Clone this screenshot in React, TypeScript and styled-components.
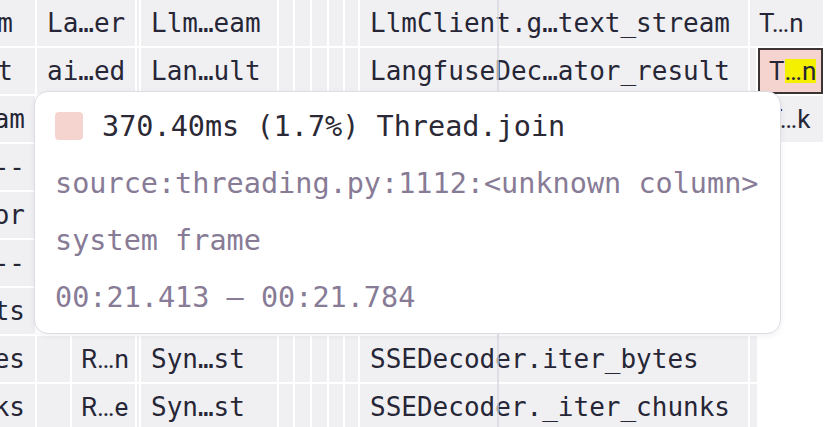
import React from 'react'
import styled, { createGlobalStyle } from 'styled-components'

const MONO = '"DejaVu Sans Mono", "Liberation Mono", monospace'
const SANS = 'Roboto, Inter, "Noto Sans", sans-serif'

type Frame = {
  w: number
  text?: string
  sans?: boolean
  end?: boolean
  pr?: number
  hot?: boolean
  match?: [string, string]
}

// common run of frames between the root column and the wide frame
const slivers = (): Frame[] => [{ w: 14 }, { w: 15 }, { w: 15 }, { w: 14 }, { w: 13 }]

// frames under the tooltip keep their boxes but no label
const rows: Frame[][] = [
  [
    { w: 35, text: '…eam', end: true, pr: 22 },
    { w: 98, text: 'La…er' },
    { w: 2 },
    { w: 136, text: 'Llm…eam' },
    ...slivers(),
    { w: 388, text: 'LlmClient.g…text_stream' },
    { w: 73, text: 'T…n', sans: true },
  ],
  [
    { w: 35, text: '…ult', end: true, pr: 22 },
    { w: 98, text: 'ai…ed' },
    { w: 2 },
    { w: 136, text: 'Lan…ult' },
    ...slivers(),
    { w: 388, text: 'LangfuseDec…ator_result' },
    { w: 6 },
    { w: 65, sans: true, hot: true, match: ['T', '…n'] },
  ],
  [
    { w: 35, text: '…eam', end: true },
    { w: 98 },
    { w: 2 },
    { w: 136 },
    ...slivers(),
    { w: 388 },
    { w: 6 },
    { w: 65, text: 'T…k', sans: true },
  ],
  [{ w: 35, text: '----', end: true }, { w: 98 }, { w: 2 }, { w: 136 }],
  [{ w: 35, text: '…tor', end: true }, { w: 98 }, { w: 2 }, { w: 136 }],
  [{ w: 35, text: '----', end: true }, { w: 98 }],
  [{ w: 35, text: '…ts', end: true }],
  [
    { w: 35, text: '…bytes', end: true },
    { w: 33 },
    { w: 63, text: 'R…n', sans: true },
    { w: 2 },
    { w: 136, text: 'Syn…st' },
    ...slivers(),
    { w: 388, text: 'SSEDecoder.iter_bytes' },
    { w: 7 },
  ],
  [
    { w: 35, text: '…chunks', end: true },
    { w: 33 },
    { w: 63, text: 'R…e', sans: true },
    { w: 2 },
    { w: 136, text: 'Syn…st' },
    ...slivers(),
    { w: 388, text: 'SSEDecoder._iter_chunks' },
    { w: 7 },
  ],
]

export default function App() {
  return (
    <>
      <GlobalStyle />
      <Stage>
        <Graph>
          {rows.map((row, i) => (
            <Row key={i}>
              {row.map((f, j) => (
                <Cell
                  key={j}
                  $w={f.w}
                  $sans={!!f.sans}
                  $end={!!f.end}
                  $pr={f.pr ?? 10}
                  $pl={f.w > 20 ? (f.sans ? 9 : 10) : 0}
                  $hot={!!f.hot}
                >
                  {f.match ? (
                    <>
                      {f.match[0]}
                      <Match>{f.match[1]}</Match>
                    </>
                  ) : (
                    f.text
                  )}
                </Cell>
              ))}
            </Row>
          ))}
        </Graph>
        <Cursor />
        <Tooltip>
          <TipLine>
            <Swatch />
            370.40ms (1.7%) Thread.join
          </TipLine>
          <TipLine $muted>source:threading.py:1112:&lt;unknown column&gt;</TipLine>
          <TipLine $muted>system frame</TipLine>
          <TipLine $muted>00:21.413 — 00:21.784</TipLine>
        </Tooltip>
      </Stage>
    </>
  )
}

/*---> Styles <---*/
const GlobalStyle = createGlobalStyle`
  body {
    margin: 0;
    background: #ffffff;
  }
`

const Stage = styled.div`
  position: relative;
  width: 828px;
  height: 427px;
  overflow: hidden;
  background: #ffffff;
`

const Graph = styled.div`
  display: flex;
  flex-direction: column;
  gap: 2px;
`

const Row = styled.div`
  display: flex;
  gap: 2px;
  height: 46px;
  flex-shrink: 0;
`

const Cell = styled.div<{
  $w: number
  $sans: boolean
  $end: boolean
  $pr: number
  $pl: number
  $hot: boolean
}>`
  flex: none;
  box-sizing: border-box;
  width: ${(p) => p.$w}px;
  display: flex;
  align-items: center;
  justify-content: ${(p) => (p.$end ? 'flex-end' : 'flex-start')};
  padding: 0 ${(p) => (p.$end ? p.$pr : 0)}px 0 ${(p) => (p.$end ? 0 : p.$pl)}px;
  overflow: hidden;
  white-space: nowrap;
  background: ${(p) => (p.$hot ? '#f5d4d0' : '#f0f0f3')};
  border: ${(p) => (p.$hot ? '2px solid #3a3434' : 'none')};
  font-family: ${(p) => (p.$sans ? SANS : MONO)};
  font-size: 26px;
  color: #262636;
`

const Match = styled.span`
  background: #f4f000;
  line-height: 24px;
`

const Cursor = styled.div`
  position: absolute;
  left: 497px;
  top: 0;
  bottom: 0;
  width: 2px;
  background: rgba(214, 214, 222, 0.7);
`

const Tooltip = styled.div`
  position: absolute;
  left: 34px;
  top: 91px;
  width: 747px;
  height: 243px;
  box-sizing: border-box;
  padding: 20px 20px;
  display: flex;
  flex-direction: column;
  gap: 29px;
  background: #ffffff;
  border: 1.5px solid #dddbe4;
  border-radius: 14px;
  box-shadow: 0 2px 6px rgba(40, 30, 60, 0.06);
`

const TipLine = styled.div<{ $muted?: boolean }>`
  display: flex;
  align-items: center;
  gap: 19px;
  height: 28px;
  white-space: nowrap;
  font-family: ${MONO};
  font-size: 28.5px;
  color: ${(p) => (p.$muted ? '#877b96' : '#2b2935')};
`

const Swatch = styled.span`
  flex: none;
  width: 28px;
  height: 28px;
  border-radius: 4px;
  background: #f5d4d0;
`
